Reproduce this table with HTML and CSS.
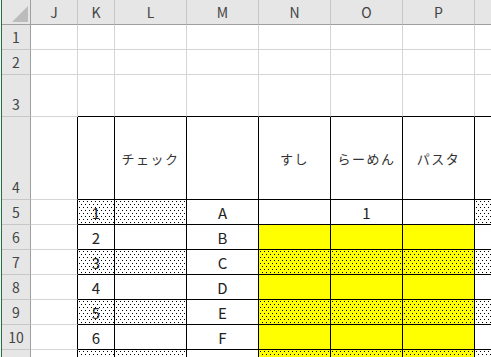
FILE: index.html
```html
<!DOCTYPE html>
<html lang="ja">
  <head>
    <meta charset="UTF-8" />
    <title>Book1 - Excel</title>
    <link rel="stylesheet" href="styles.css">
  </head>
  <body>
    <div class="sheet" id="sheet">
      <div class="corner"><span class="corner-mark"></span></div>
    </div>

    <script>
      const cols = ["J", "K", "L", "M", "N", "O", "P", "Q"];
      const table = ["K", "L", "M", "N", "O", "P", "Q"];
      const foods = ["N", "O", "P"];
      const letters = ["A", "B", "C", "D", "E", "F", "G"];

      const values = {
        "4L": "チェック",
        "4N": "すし",
        "4O": "らーめん",
        "4P": "パスタ",
        "5O": "1",
      };

      const sheet = document.getElementById("sheet");

      function add(cls, text) {
        const el = document.createElement("div");
        el.className = cls;
        if (text) el.textContent = text;
        sheet.appendChild(el);
      }

      cols.forEach((c) => add("col-head", c === "Q" ? "" : c));

      for (let r = 1; r <= 11; r++) {
        add("row-head", String(r));
        cols.forEach((c) => {
          let cls = "cell";
          let text = values[r + c] || "";

          if (r >= 4 && table.includes(c)) cls += " tbl";
          if (r === 3 && table.includes(c)) cls += " tbl-top";
          if (r >= 4 && c === "J") cls += " tbl-left";
          if (r === 4) cls += " title";

          if (r >= 6 && foods.includes(c)) cls += " yellow";
          const striped = r >= 5 && r % 2 === 1;
          if (striped && (["K", "L", "Q"].includes(c) || (r >= 7 && foods.includes(c)))) {
            cls += " dots";
          }

          if (r >= 5 && c === "K") text = String(r - 4);
          if (r >= 5 && c === "M") text = letters[r - 5];

          add(cls, text);
        });
      }
    </script>
  </body>
</html>
```

FILE: styles.css
```css
:root {
  --grid-line: #d4d4d4;
  --head-bg: #e6e6e6;
  --head-line: #c6c6c6;
  --head-edge: #9f9f9f;
  --head-text: #444;
  --excel-green: #217346;
}

* {
  box-sizing: border-box;
  margin: 0;
  padding: 0;
}

body {
  background: #fff;
  overflow: hidden;
  border-left: 1px solid #f2f2f2;
  font-family: "Noto Sans CJK JP", "Noto Sans", sans-serif;
}

.sheet {
  display: grid;
  grid-template-columns: 29px 47px 37px 72px 72px 72px 72px 72px 72px;
  grid-template-rows: 25px 25px 25px 42px 83px repeat(7, 25px);
  border-left: 1px solid var(--excel-green);
  width: max-content;
}

.sheet > div {
  border-right: 1px solid var(--grid-line);
  border-bottom: 1px solid var(--grid-line);
}

/* headers */
.corner {
  display: flex;
  justify-content: flex-end;
  align-items: flex-end;
  padding: 0 2px 2px 0;
  background: var(--head-bg);
  border-right-color: var(--head-edge) !important;
  border-bottom-color: var(--head-edge) !important;
}

.corner-mark {
  width: 16px;
  height: 16px;
  background: #bcbcbc;
  clip-path: polygon(100% 0, 100% 100%, 0 100%);
}

.col-head {
  display: flex;
  align-items: center;
  justify-content: center;
  background: var(--head-bg);
  color: var(--head-text);
  font-size: 14px;
  line-height: 1;
  border-right-color: var(--head-line) !important;
  border-bottom-color: var(--head-edge) !important;
}

.row-head {
  display: flex;
  align-items: flex-end;
  justify-content: center;
  padding-bottom: 5px;
  background: var(--head-bg);
  color: var(--head-text);
  font-size: 14px;
  line-height: 1;
  border-right-color: var(--head-edge) !important;
  border-bottom-color: var(--head-line) !important;
}

/* cells */
.cell {
  display: flex;
  align-items: flex-end;
  justify-content: center;
  padding-bottom: 4px;
  font-size: 15px;
  line-height: 1;
  color: #222;
}

.cell.tbl {
  border-right-color: #000;
  border-bottom-color: #000;
}

.cell.tbl-top {
  border-bottom-color: #000;
}

.cell.tbl-left {
  border-right-color: #000;
}

.cell.title {
  align-items: center;
  padding-bottom: 0;
  font-size: 13px;
  letter-spacing: 1.5px;
  color: #333;
}

.yellow {
  background-color: #ffff00;
}

/* light dotted fill, one pixel dots */
.dots {
  background-image: url("data:image/svg+xml,%3Csvg xmlns='http://www.w3.org/2000/svg' width='4' height='6' shape-rendering='crispEdges'%3E%3Crect x='1' y='1' width='1' height='1'/%3E%3Crect x='3' y='4' width='1' height='1'/%3E%3C/svg%3E");
  background-size: 4px 6px;
}
```
